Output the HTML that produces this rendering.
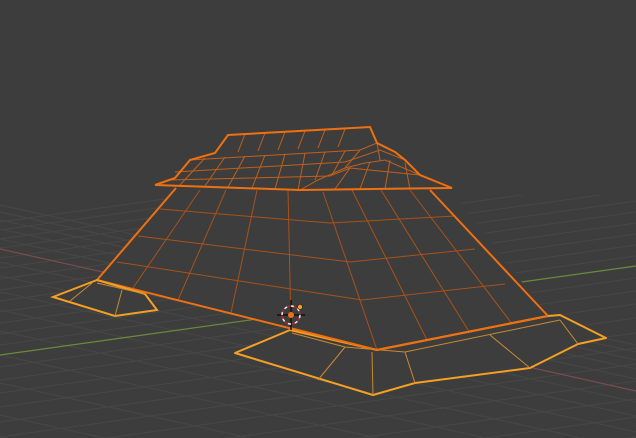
<!DOCTYPE html>
<html><head><meta charset="utf-8"><style>
html,body{margin:0;padding:0;background:#3d3d3d;width:636px;height:438px;overflow:hidden}
svg{display:block}
</style></head><body>
<svg width="636" height="438" viewBox="0 0 636 438" xmlns="http://www.w3.org/2000/svg">
<rect width="636" height="438" fill="#3d3d3d"/>
<g stroke="#474747" stroke-width="1" fill="none">
<line x1="0" y1="205" x2="636" y2="345"/>
<line x1="0" y1="212" x2="636" y2="352"/>
<line x1="0" y1="220" x2="636" y2="360"/>
<line x1="0" y1="229" x2="636" y2="369"/>
<line x1="0" y1="239" x2="636" y2="379"/>
<line x1="0" y1="262" x2="636" y2="402"/>
<line x1="0" y1="276" x2="636" y2="416"/>
<line x1="0" y1="292" x2="636" y2="432"/>
<line x1="0" y1="310" x2="636" y2="450"/>
<line x1="0" y1="331" x2="636" y2="471"/>
<line x1="0" y1="355" x2="636" y2="495"/>
<line x1="0" y1="383" x2="636" y2="523"/>
<line x1="0" y1="415" x2="636" y2="555"/>
<line x1="0" y1="222" x2="636" y2="133"/>
<line x1="0" y1="230" x2="636" y2="141"/>
<line x1="0" y1="239" x2="636" y2="150"/>
<line x1="0" y1="248" x2="636" y2="159"/>
<line x1="0" y1="258" x2="636" y2="169"/>
<line x1="0" y1="268" x2="636" y2="179"/>
<line x1="0" y1="279" x2="636" y2="190"/>
<line x1="0" y1="290" x2="636" y2="201"/>
<line x1="0" y1="301" x2="636" y2="212"/>
<line x1="0" y1="312" x2="636" y2="223"/>
<line x1="0" y1="323" x2="636" y2="234"/>
<line x1="0" y1="334" x2="636" y2="245"/>
<line x1="0" y1="345" x2="636" y2="256"/>
<line x1="0" y1="367" x2="636" y2="278"/>
<line x1="0" y1="380" x2="636" y2="291"/>
<line x1="0" y1="393" x2="636" y2="304"/>
<line x1="0" y1="407" x2="636" y2="318"/>
<line x1="0" y1="422" x2="636" y2="333"/>
<line x1="0" y1="437" x2="636" y2="348"/>
<line x1="0" y1="453" x2="636" y2="364"/>
<line x1="0" y1="470" x2="636" y2="381"/>
<line x1="0" y1="488" x2="636" y2="399"/>
<line x1="0" y1="506" x2="636" y2="417"/>
<line x1="0" y1="526" x2="636" y2="437"/>
</g>
<rect x="0" y="0" width="636" height="195" fill="#3d3d3d"/>
<line x1="0" y1="249" x2="636" y2="391" stroke="#7a4a55" stroke-width="1.2"/>
<line x1="0" y1="355" x2="636" y2="266" stroke="#6d8a3a" stroke-width="1.2"/>

<polygon points="175,187 450,189 548,316 377,350 97,280" fill="#3d3d3d"/>
<g stroke="#a8521a" stroke-width="1" fill="none">
<polyline points="160,209 330,223 455,216"/>
<polyline points="138,236 350,262 475,249"/>
<polyline points="117,262 362,300 505,284"/>
<line x1="200" y1="190" x2="133" y2="288"/>
<line x1="226" y1="190" x2="178" y2="300"/>
<line x1="257" y1="190" x2="231" y2="313"/>
<line x1="288" y1="190" x2="291" y2="327"/>
<line x1="323" y1="192" x2="377" y2="350"/>
<line x1="352" y1="190" x2="427" y2="340"/>
<line x1="381" y1="190" x2="470" y2="333"/>
<line x1="410" y1="190" x2="513" y2="325"/>
</g>
<g stroke="#f07010" stroke-width="2" fill="none">
<line x1="176" y1="188" x2="97" y2="280"/>
<line x1="430" y1="190" x2="548" y2="316"/>
<polyline points="97,280 377,350 548,316"/>
</g>

<polygon points="155,185 175,178 190,160 215,153 228,135 370,127 377,143 395,152 405,160 420,175 452,188 300,190" fill="#3d3d3d"/>
<g stroke="#c0601a" stroke-width="1" fill="none">
<polyline points="190,160 360,150 377,143"/>
<polyline points="175,172 345,162 380,150 405,160"/>
<polyline points="170,180 330,176 350,168 420,175"/>
<polyline points="300,190 318,180 345,168 365,163 385,160 420,175"/>
<line x1="360" y1="150" x2="345" y2="168"/>
<line x1="377" y1="143" x2="380" y2="160"/>
<line x1="245" y1="134" x2="238" y2="152"/>
<line x1="265" y1="133" x2="258" y2="151"/>
<line x1="285" y1="132" x2="278" y2="150"/>
<line x1="305" y1="131" x2="298" y2="149"/>
<line x1="325" y1="130" x2="318" y2="148"/>
<line x1="345" y1="129" x2="338" y2="147"/>
<line x1="205" y1="158" x2="180" y2="185"/>
<line x1="225" y1="157" x2="205" y2="186"/>
<line x1="245" y1="156" x2="228" y2="187"/>
<line x1="265" y1="155" x2="252" y2="188"/>
<line x1="285" y1="154" x2="275" y2="189"/>
<line x1="305" y1="153" x2="298" y2="190"/>
<line x1="325" y1="152" x2="315" y2="180"/>
<line x1="345" y1="151" x2="332" y2="175"/>
<line x1="390" y1="160" x2="385" y2="189"/>
<line x1="405" y1="163" x2="410" y2="189"/>
<line x1="370" y1="162" x2="360" y2="189"/>
<line x1="350" y1="168" x2="335" y2="189"/>
</g>
<g stroke="#f07010" stroke-width="2" fill="none">
<polyline points="155,185 175,178 190,160 215,153 228,135 370,127 377,143 395,152 405,160 420,175 452,188 300,190 155,185"/>
</g>

<g fill="#3d3d3d" stroke="#f5a024" stroke-width="2">
<polygon points="53,297 97,280 145,294 157,310 115,316"/>
</g>
<g stroke="#c88a30" stroke-width="1">
<line x1="70" y1="301" x2="92" y2="283"/>
<line x1="115" y1="316" x2="122" y2="290"/>
<line x1="97" y1="283" x2="145" y2="294"/>
</g>

<polygon points="235,353 290,330 377,350 548,316 560,315 606,338 578,344 530,368 415,383 373,395" fill="#3d3d3d" stroke="#f5a024" stroke-width="2" stroke-linejoin="round"/>
<g stroke="#c88a30" stroke-width="1" fill="none">
<polyline points="292,333 345,347 405,352 560,320"/>
<line x1="345" y1="347" x2="318" y2="380"/>
<line x1="372" y1="352" x2="373" y2="395"/>
<line x1="405" y1="352" x2="415" y2="383"/>
<line x1="490" y1="335" x2="530" y2="368"/>
<line x1="560" y1="320" x2="578" y2="344"/>
</g>
<g stroke="#f07010" stroke-width="2" fill="none">
<polyline points="290,328 377,350 548,316"/>
</g>

<g>
<line x1="291" y1="300" x2="291" y2="330" stroke="#111" stroke-width="1.5"/>
<line x1="277" y1="315" x2="305" y2="315" stroke="#111" stroke-width="1.5"/>
<circle cx="291" cy="315" r="9" fill="none" stroke="#eee" stroke-width="1.5" stroke-dasharray="4 3"/>
<circle cx="291" cy="315" r="9" fill="none" stroke="#c0202a" stroke-width="1.5" stroke-dasharray="3 4" stroke-dashoffset="4"/>
<circle cx="291" cy="315" r="3" fill="#f07010"/>
<circle cx="300" cy="307" r="2.5" fill="#f5a024" stroke="#222" stroke-width="0.6"/>
</g>
</svg>
</body></html>
